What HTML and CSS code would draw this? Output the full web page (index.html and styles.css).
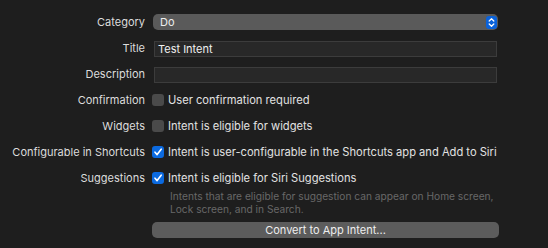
FILE: index.html
```html
<!DOCTYPE html>
<html lang="en">
<head>
    <meta charset="UTF-8">
    <meta name="viewport" content="width=device-width, initial-scale=1.0">
    <title>Intent</title>
    <link rel="stylesheet" href="styles.css">
</head>
<body>
    <!-- inspecteur de l'intent -->
    <div class="form">
        <div class="label">Category</div>
        <div class="popup">
            <span>Do</span>
            <span class="stepper">
                <svg width="11" height="13" viewBox="0 0 11 13">
                    <path d="M3.2 5 L5.5 2.8 L7.8 5" fill="none" stroke="#fff" stroke-width="1.3" stroke-linecap="round" stroke-linejoin="round"/>
                    <path d="M3.2 8 L5.5 10.2 L7.8 8" fill="none" stroke="#fff" stroke-width="1.3" stroke-linecap="round" stroke-linejoin="round"/>
                </svg>
            </span>
        </div>

        <div class="label">Title</div>
        <div class="field">Test Intent</div>

        <div class="label">Description</div>
        <div class="field"></div>

        <div class="label">Confirmation</div>
        <div class="check-row"><span class="box"></span>User confirmation required</div>

        <div class="label">Widgets</div>
        <div class="check-row"><span class="box"></span>Intent is eligible for widgets</div>

        <div class="label">Configurable in Shortcuts</div>
        <div class="check-row"><span class="box on">
            <svg width="12" height="12" viewBox="0 0 12 12"><path d="M3 6.2 L5.1 8.6 L9.2 3.2" fill="none" stroke="#fff" stroke-width="1.6" stroke-linecap="round" stroke-linejoin="round"/></svg>
        </span>Intent is user-configurable in the Shortcuts app and Add to Siri</div>

        <div class="label">Suggestions</div>
        <div class="check-row"><span class="box on">
            <svg width="12" height="12" viewBox="0 0 12 12"><path d="M3 6.2 L5.1 8.6 L9.2 3.2" fill="none" stroke="#fff" stroke-width="1.6" stroke-linecap="round" stroke-linejoin="round"/></svg>
        </span>Intent is eligible for Siri Suggestions</div>

        <div></div>
        <div class="help">Intents that are eligible for suggestion can appear on Home screen,<br>Lock screen, and in Search.</div>

        <div></div>
        <button class="convert-btn">Convert to App Intent...</button>
    </div>
</body>
</html>
```

FILE: styles.css
```css
/* fond sombre de l'inspecteur */
body {
    margin: 0;
    background-color: #1e1e1e;
    color: #dcdcdc;
    font-family: "Inter", "Noto Sans", sans-serif;
    font-size: 11px;
}

.form {
    display: grid;
    grid-template-columns: 145px 345px;
    grid-auto-rows: 16px;
    column-gap: 8px;
    row-gap: 10px;
    padding-top: 14px;
}

.label {
    text-align: right;
    line-height: 16px;
    white-space: nowrap;
}

/* menu deroulant */
.popup {
    display: flex;
    align-items: center;
    justify-content: space-between;
    background-color: #5a5a5a;
    border-radius: 5px;
    padding: 0 1px 0 7px;
    color: #eeeeee;
}
.stepper {
    display: flex;
    width: 11px;
    height: 13px;
    background-color: #0a62da;
    border-radius: 3px;
}

/* champs de texte */
.field {
    box-sizing: border-box;
    height: 16px;
    margin: 1px 1px 0 1px;
    background-color: #282828;
    border: 1px solid #3c3c3c;
    padding: 0 3px;
    line-height: 14px;
    color: #f0f0f0;
}

.check-row {
    display: flex;
    align-items: center;
    white-space: nowrap;
    color: #e2e2e2;
    font-size: 11.15px;
}
.box {
    box-sizing: border-box;
    width: 12px;
    height: 12px;
    margin: 0 4px 0 -1px;
    border-radius: 3px;
    background-color: #4a4a4a;
    display: flex;
}
.box.on {
    background-color: #0b6ae0;
}

.help {
    height: 26px;
    margin-top: -6px;
    padding-left: 17px;
    font-size: 10.2px;
    line-height: 12.5px;
    color: #686868;
    white-space: nowrap;
}

/* bouton de conversion */
.convert-btn {
    margin: 0 -1px 0 -1px;
    background-color: #5c5c5c;
    border: none;
    border-radius: 5px;
    color: #eeeeee;
    font-family: inherit;
    font-size: 11px;
    padding: 0;
    height: 16px;
}
```
